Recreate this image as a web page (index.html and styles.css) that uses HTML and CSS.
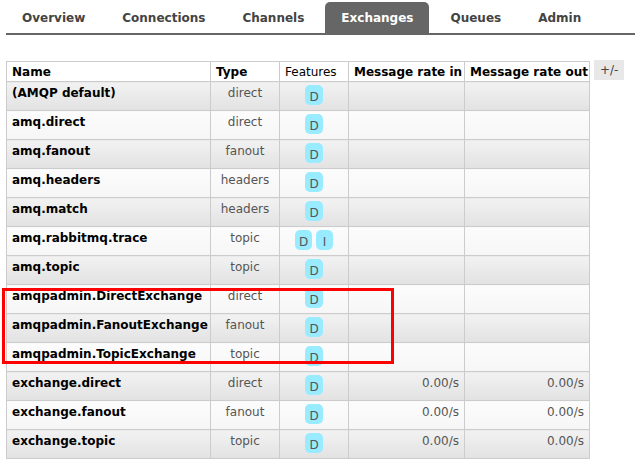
FILE: index.html
```html
<!DOCTYPE html>
<html lang="en">
<head>
    <meta charset="UTF-8">
    <title>Exchanges</title>
    <link rel="stylesheet" href="styles.css">
</head>
<body>
    <ul class="tabs">
        <li>Overview</li>
        <li>Connections</li>
        <li>Channels</li>
        <li class="active">Exchanges</li>
        <li>Queues</li>
        <li>Admin</li>
    </ul>

    <div class="main">
        <table class="list">
            <thead>
                <tr>
                    <th class="c-name">Name</th>
                    <th class="c-type">Type</th>
                    <th class="c-feat">Features</th>
                    <th class="c-in">Message rate in</th>
                    <th class="c-out">Message rate out</th>
                </tr>
            </thead>
            <tbody>
                <tr class="alt1"><td class="name">(AMQP default)</td><td class="type">direct</td><td class="feat"><abbr>D</abbr></td><td></td><td></td></tr>
                <tr class="alt2"><td class="name">amq.direct</td><td class="type">direct</td><td class="feat"><abbr>D</abbr></td><td></td><td></td></tr>
                <tr class="alt1"><td class="name">amq.fanout</td><td class="type">fanout</td><td class="feat"><abbr>D</abbr></td><td></td><td></td></tr>
                <tr class="alt2"><td class="name">amq.headers</td><td class="type">headers</td><td class="feat"><abbr>D</abbr></td><td></td><td></td></tr>
                <tr class="alt1"><td class="name">amq.match</td><td class="type">headers</td><td class="feat"><abbr>D</abbr></td><td></td><td></td></tr>
                <tr class="alt2"><td class="name">amq.rabbitmq.trace</td><td class="type">topic</td><td class="feat"><abbr>D</abbr> <abbr>I</abbr></td><td></td><td></td></tr>
                <tr class="alt1"><td class="name">amq.topic</td><td class="type">topic</td><td class="feat"><abbr>D</abbr></td><td></td><td></td></tr>
                <tr class="alt2"><td class="name">amqpadmin.DirectExchange</td><td class="type">direct</td><td class="feat"><abbr>D</abbr></td><td></td><td></td></tr>
                <tr class="alt1"><td class="name">amqpadmin.FanoutExchange</td><td class="type">fanout</td><td class="feat"><abbr>D</abbr></td><td></td><td></td></tr>
                <tr class="alt2"><td class="name">amqpadmin.TopicExchange</td><td class="type">topic</td><td class="feat"><abbr>D</abbr></td><td></td><td></td></tr>
                <tr class="alt1"><td class="name">exchange.direct</td><td class="type">direct</td><td class="feat"><abbr>D</abbr></td><td class="rate">0.00/s</td><td class="rate">0.00/s</td></tr>
                <tr class="alt2"><td class="name">exchange.fanout</td><td class="type">fanout</td><td class="feat"><abbr>D</abbr></td><td class="rate">0.00/s</td><td class="rate">0.00/s</td></tr>
                <tr class="alt1"><td class="name">exchange.topic</td><td class="type">topic</td><td class="feat"><abbr>D</abbr></td><td class="rate">0.00/s</td><td class="rate">0.00/s</td></tr>
            </tbody>
        </table>
        <span class="toggle">+/-</span>
    </div>

    <div class="highlight"></div>
</body>
</html>
```

FILE: styles.css
```css
body {
    margin: 0;
    padding: 2px 0 0 6px;
    font-family: "DejaVu Sans", Verdana, sans-serif;
    font-size: 12px;
    color: #000;
    background: #fff;
}
.tabs {
    list-style: none;
    margin: 0;
    padding: 0;
    display: flex;
    border-bottom: 2px solid #666;
}
.tabs li {
    padding: 0 16px;
    margin-right: 5px;
    height: 31px;
    line-height: 32px;
    font-weight: bold;
    color: #444;
    border-radius: 5px 5px 0 0;
}
.tabs li.active {
    background: #666;
    color: #fff;
}
.main {
    display: flex;
    align-items: flex-start;
    gap: 4px;
    margin-top: 26px;
}
table.list {
    border-collapse: collapse;
    table-layout: fixed;
    width: 584px;
}
table.list th,
table.list td {
    border: 1px solid #ccc;
    padding: 0 5px;
    line-height: 15px;
    text-align: left;
    vertical-align: top;
    overflow: hidden;
    white-space: nowrap;
}
table.list th {
    background: #fff;
    font-weight: bold;
    padding-top: 3px;
    padding-bottom: 1px;
}
table.list th.c-feat { font-weight: normal; }
.c-name { width: 193px; }
.c-type { width: 58px; }
.c-feat { width: 58px; }
.c-in { width: 105px; }
.c-out { width: 114px; }
tbody tr { height: 29px; }
table.list td { padding-top: 4px; }
table.list td.name { font-weight: bold; }
table.list td.type {
    text-align: center;
    color: #555;
}
table.list td.feat {
    text-align: center;
    padding-top: 3px;
}
table.list td.rate {
    text-align: right;
    color: #555;
}
tr.alt1 td { background: linear-gradient(#f2f2f2, #e2e2e2); }
tr.alt2 td { background: linear-gradient(#fcfcfc, #f6f6f6); }
abbr {
    display: inline-block;
    vertical-align: top;
    background: #99ebff;
    color: #555;
    border-radius: 5px;
    padding: 5px 4px 0;
    line-height: 15px;
    min-width: 9px;
    text-align: center;
}
.toggle {
    background: #e8e8e8;
    color: #444;
    padding: 0 6px;
    line-height: 20px;
    margin-top: -1px;
}
.highlight {
    position: absolute;
    left: 2px;
    top: 288px;
    width: 386px;
    height: 70px;
    border: 3px solid #f00;
}
```
